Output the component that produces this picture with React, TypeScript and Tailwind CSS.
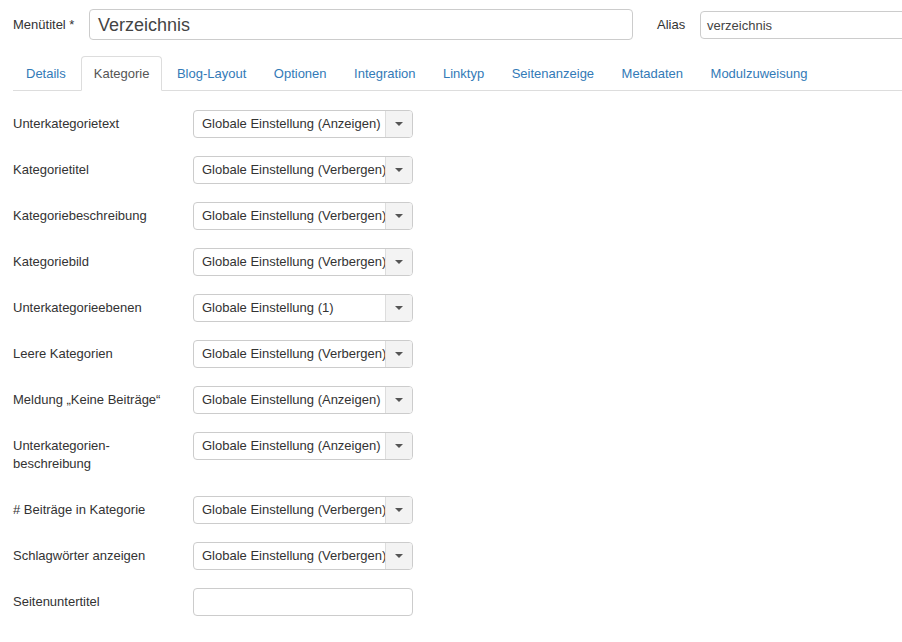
import React from 'react';

const tabs = ['Details', 'Kategorie', 'Blog-Layout', 'Optionen', 'Integration', 'Linktyp', 'Seitenanzeige', 'Metadaten', 'Modulzuweisung'];

const rows: { label: React.ReactNode; value?: string }[] = [
  { label: 'Unterkategorietext', value: 'Globale Einstellung (Anzeigen)' },
  { label: 'Kategorietitel', value: 'Globale Einstellung (Verbergen)' },
  { label: 'Kategoriebeschreibung', value: 'Globale Einstellung (Verbergen)' },
  { label: 'Kategoriebild', value: 'Globale Einstellung (Verbergen)' },
  { label: 'Unterkategorieebenen', value: 'Globale Einstellung (1)' },
  { label: 'Leere Kategorien', value: 'Globale Einstellung (Verbergen)' },
  { label: 'Meldung „Keine Beiträge“', value: 'Globale Einstellung (Anzeigen)' },
  { label: <>Unterkategorien-<br />beschreibung</>, value: 'Globale Einstellung (Anzeigen)' },
  { label: '# Beiträge in Kategorie', value: 'Globale Einstellung (Verbergen)' },
  { label: 'Schlagwörter anzeigen', value: 'Globale Einstellung (Verbergen)' },
  { label: 'Seitenuntertitel' },
];

function Select({ value }: { value: string }) {
  return (
    <div className="flex h-[28px] w-[220px] overflow-hidden rounded-[4px] border border-[#cccccc] bg-white">
      <div className="flex-1 overflow-hidden whitespace-nowrap pl-[8px] leading-[26px] text-[#333]">{value}</div>
      <div className="flex w-[27px] shrink-0 items-center justify-center border-l border-[#dddddd] bg-[#f3f3f3]">
        <svg width="8" height="4" viewBox="0 0 8 4">
          <path d="M0 0h8L4 4z" fill="#555" />
        </svg>
      </div>
    </div>
  );
}

export default function App() {
  return (
    <div className="h-[642px] w-[902px] overflow-hidden bg-white pl-[13px] font-['Liberation_Sans',Arial,sans-serif] text-[13px] text-[#333]">
      <div className="flex items-center pt-[9px]">
        <label className="w-[76px] shrink-0">Menütitel *</label>
        <div className="h-[31px] w-[544px] shrink-0 rounded-[4px] border border-[#cccccc] pl-[8px] pt-px text-[18px] leading-[29px] text-[#444]">
          Verzeichnis
        </div>
        <label className="ml-[24px] w-[43px] shrink-0">Alias</label>
        <div className="h-[28px] w-[240px] shrink-0 rounded-[4px] border border-[#cccccc] pl-[6px] pt-px leading-[26px] text-[#444]">
          verzeichnis
        </div>
      </div>

      <ul className="mt-[16px] flex border-b border-[#dddddd]">
        {tabs.map((t, i) => (
          <li
            key={t}
            className={
              t === 'Kategorie'
                ? '-mb-px mr-[1.5px] rounded-t-[4px] border border-[#dddddd] border-b-white bg-white px-3 py-2 leading-[17px] text-[#555]'
                : i === 0
                  ? '-mb-px mr-[2px] rounded-t-[4px] border border-transparent px-3 py-2 leading-[17px] text-[#337ab7]'
                  : '-mb-px mr-[1.5px] rounded-t-[4px] border border-transparent px-3 py-2 leading-[17px] text-[#337ab7]'
            }
          >
            {t}
          </li>
        ))}
      </ul>

      <div className="mt-[19px]">
        {rows.map((r, i) => (
          <div key={i} className="mb-[18px] flex">
            <label className="w-[180px] shrink-0 py-[5px] leading-[18px]">{r.label}</label>
            {r.value ? (
              <Select value={r.value} />
            ) : (
              <div className="h-[28px] w-[220px] rounded-[4px] border border-[#cccccc] bg-white" />
            )}
          </div>
        ))}
      </div>
    </div>
  );
}
